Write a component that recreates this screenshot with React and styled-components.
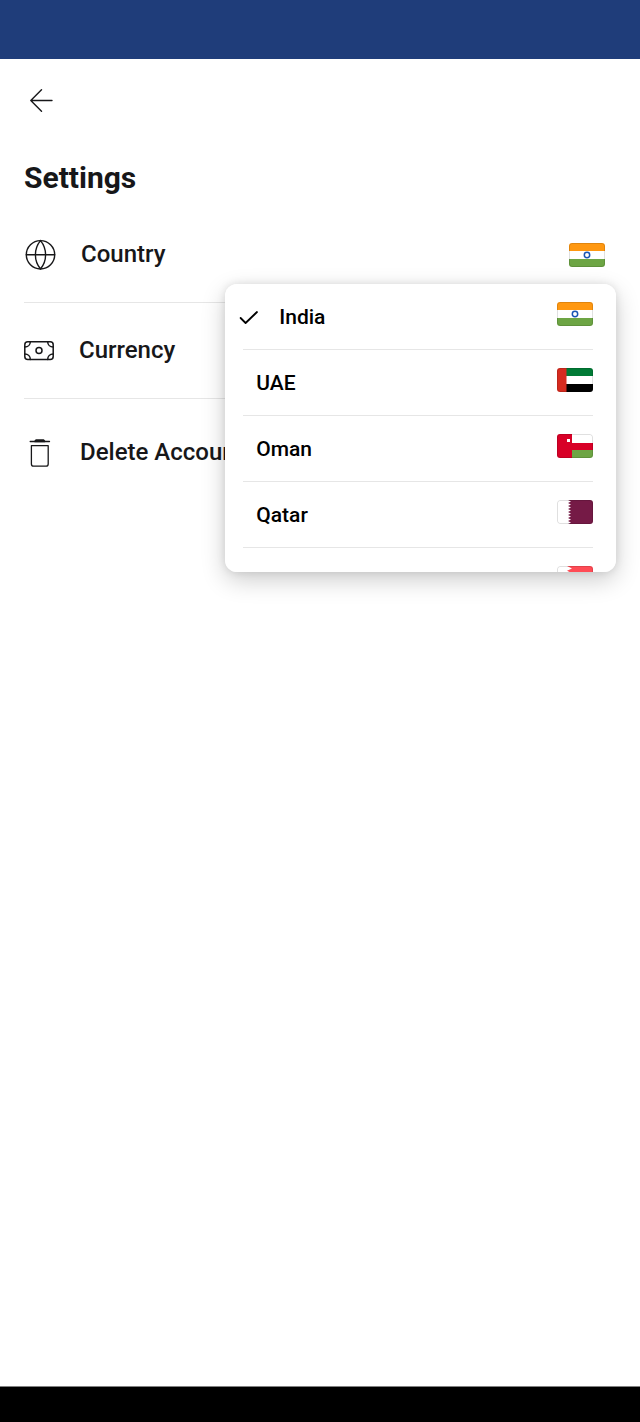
import React, { useState } from 'react'
import styled, { createGlobalStyle } from 'styled-components'

const GlobalStyle = createGlobalStyle`
  * {
    box-sizing: border-box;
  }
  body {
    margin: 0;
    background: #fff;
    color: #171719;
    font-family: Roboto, sans-serif;
  }
  button {
    border: 0;
    padding: 0;
    background: none;
    color: inherit;
    font: inherit;
    text-align: left;
    cursor: pointer;
  }
`

const countries = [
  { code: 'in', name: 'India' },
  { code: 'ae', name: 'UAE' },
  { code: 'om', name: 'Oman' },
  { code: 'qa', name: 'Qatar' },
  { code: 'bh', name: 'Bahrain' },
]

// white band with a serrated edge, used by Qatar and Bahrain
const Serrated = ({ color, left, right, teeth }) => {
  const step = 24 / teeth
  let d = `M36 0H${left}`
  for (let i = 0; i < teeth; i++) {
    d += `L${right} ${i * step + step / 2}L${left} ${(i + 1) * step}`
  }
  return <path d={`${d}H36Z`} fill={color} />
}

const flagArt = {
  in: (
    <>
      <path d="M0 0h36v8H0z" fill="#ff9811" />
      <path d="M0 16h36v8H0z" fill="#6da544" />
      <circle cx="18" cy="12" r="2.7" fill="#fff" stroke="#1a56b4" strokeWidth="1.5" />
    </>
  ),
  ae: (
    <>
      <path d="M9 0h27v8H9z" fill="#007a35" />
      <path d="M9 16h27v8H9z" fill="#000" />
      <path d="M0 0h9.5v24H0z" fill="#d62b1f" />
    </>
  ),
  om: (
    <>
      <path d="M15 16h21v8H15z" fill="#6da544" />
      <path d="M0 0h15v9h21v7H15v8H0z" fill="#d80027" />
      <path d="M10 5h3v3h-3z" fill="#fff" />
    </>
  ),
  qa: <Serrated color="#751a46" left={11} right={14} teeth={8} />,
  bh: <Serrated color="#ff4b55" left={10} right={15} teeth={5} />,
}

const Flag = ({ code }) => (
  <FlagBox>
    <svg width="36" height="24" viewBox="0 0 36 24" aria-hidden="true">
      {flagArt[code]}
    </svg>
  </FlagBox>
)

const GlobeIcon = () => (
  <Icon width="32" height="32" viewBox="0 0 32 32" strokeWidth="1.4">
    <circle cx="16.5" cy="15.8" r="14.2" />
    <path d="M2.3 15.8h28.4M16.5 1.6c-6.8 8.2-6.8 20.2 0 28.4M16.5 1.6c6.8 8.2 6.8 20.2 0 28.4" />
  </Icon>
)

const CashIcon = () => (
  <Icon width="30" height="32" viewBox="0 0 30 32" strokeWidth="1.5">
    <rect x="0.8" y="6.8" width="28.4" height="17.6" rx="3" />
    <circle cx="15" cy="15.6" r="3" />
    <path d="M6.3 6.8c0 3-2.3 5.3-5.5 5.3M23.7 6.8c0 3 2.3 5.3 5.5 5.3M.8 19.1c3.2 0 5.5 2.3 5.5 5.3M29.2 19.1c-3.2 0-5.5 2.3-5.5 5.3" />
  </Icon>
)

const TrashIcon = () => (
  <Icon width="31" height="32" viewBox="0 0 31 32" strokeWidth="1.3">
    <path d="M7.4 8.7h16.8v18.2a2.3 2.3 0 0 1-2.3 2.3H9.700a2.3 2.3 0 0 1-2.3-2.3z" />
    <path d="M6.200 4.500h19.300" />
    <path d="M10.700 4.500l1.300-1.500h7.600l1.300 1.500z" fill="currentColor" />
  </Icon>
)

const App = () => {
  const [selected, setSelected] = useState('in')
  const [open, setOpen] = useState(true)

  const pick = (code) => {
    setSelected(code)
    setOpen(false)
  }

  return (
    <Page>
      <GlobalStyle />
      <StatusBar />
      <Content>
        <BackButton aria-label="Back">
          <Icon width="23" height="23" viewBox="0 0 23 23" strokeWidth="1.4">
            <path d="M11.5 .8L.8 11.5l10.7 10.7M.8 11.5H22" />
          </Icon>
        </BackButton>
        <Title>Settings</Title>
        <Rows>
          <Row>
            <RowButton aria-expanded={open} onClick={() => setOpen(!open)}>
              <GlobeIcon />
              <Label>Country</Label>
              <Flag code={selected} />
            </RowButton>
            {open && (
              <Menu>
                {countries.map(({ code, name }) => (
                  <MenuItem key={code}>
                    <MenuButton $selected={code === selected} onClick={() => pick(code)}>
                      {code === selected && (
                        <Icon width="20" height="20" viewBox="0 0 20 20" strokeWidth="1.8">
                          <path d="M1.6 11l5 5L18 5" />
                        </Icon>
                      )}
                      <MenuLabel>{name}</MenuLabel>
                      <Flag code={code} />
                    </MenuButton>
                  </MenuItem>
                ))}
              </Menu>
            )}
          </Row>
          <Row>
            <RowButton>
              <CashIcon />
              <Label>Currency</Label>
            </RowButton>
          </Row>
          <Row $last>
            <RowButton>
              <TrashIcon />
              <Label>Delete Account</Label>
            </RowButton>
          </Row>
        </Rows>
      </Content>
      <NavBar />
    </Page>
  )
}

export default App

const Page = styled.div`
  display: flex;
  flex-direction: column;
  min-height: 100vh;
`
const StatusBar = styled.div`
  height: 59px;
  background: #1f3d7a;
`
const NavBar = styled.div`
  height: 36px;
  background: #000;
  border-top: 1px solid #808080;
`
const Content = styled.main`
  flex: 1;
  padding: 24px;
`
const BackButton = styled.button`
  display: flex;
  padding: 6px;
`
const Icon = styled.svg`
  flex: none;
  fill: none;
  stroke: currentColor;
  stroke-linecap: round;
  stroke-linejoin: round;
`
const Title = styled.h1`
  margin: 40px 0 0;
  font-size: 30px;
  line-height: 40px;
  font-weight: 700;
`
const Rows = styled.ul`
  margin: 9px 0 0;
  padding: 0;
  list-style: none;
`
const Row = styled.li`
  position: relative;
  padding-top: ${(props) => (props.$last ? '6px' : '0')};
  border-bottom: ${(props) => (props.$last ? '0' : '1px solid #e6e6e6')};
`
const RowButton = styled.button`
  display: flex;
  align-items: center;
  gap: 25px;
  width: 100%;
  height: 95px;
  padding-right: 11px;
`
const Label = styled.span`
  flex: 1;
  padding-bottom: 2px;
  font-size: 24px;
  line-height: 32px;
  font-weight: 500;
`
const FlagBox = styled.span`
  position: relative;
  display: flex;
  flex: none;
  border-radius: 3px;
  overflow: hidden;
  background: #fff;
  &::after {
    content: '';
    position: absolute;
    inset: 0;
    border: 1px solid rgba(0, 0, 0, 0.12);
    border-radius: 3px;
  }
`
const Menu = styled.ul`
  position: absolute;
  z-index: 1;
  top: 77px;
  right: 0;
  width: 66%;
  height: 288px;
  margin: 0;
  padding: 0 23px 0 18px;
  list-style: none;
  overflow-y: auto;
  scrollbar-width: none;
  border-radius: 12px;
  background: #fff;
  color: #000;
  box-shadow: 0 8px 24px rgba(0, 0, 0, 0.2), 0 0 8px rgba(0, 0, 0, 0.1);
`
const MenuItem = styled.li`
  border-bottom: 1px solid #e6e6e6;
`
const MenuButton = styled.button`
  display: flex;
  align-items: flex-start;
  gap: 20px;
  width: 100%;
  height: 65px;
  padding: 18px 0 0 ${(props) => (props.$selected ? '0' : '13px')};
  ${Icon} {
    margin: 5px 0 0 -4px;
  }
`
const MenuLabel = styled.span`
  flex: 1;
  font-size: 21px;
  line-height: 30px;
  font-weight: 500;
`
